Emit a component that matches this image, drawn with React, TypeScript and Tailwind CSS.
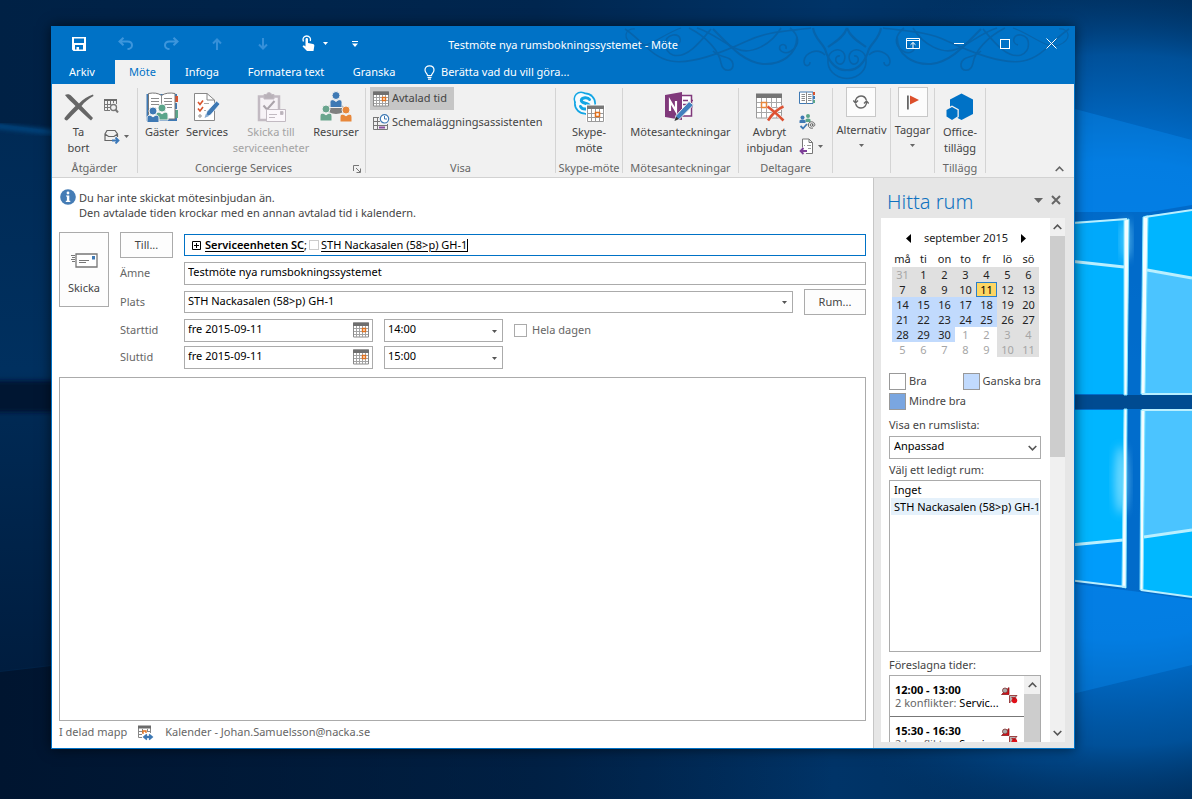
import type { ReactNode } from "react";

type IconProps = { className?: string };

/* ---------- desktop ---------- */

const Wallpaper = () => (
    <svg className="absolute inset-0 h-full w-full" viewBox="0 0 1192 799" preserveAspectRatio="none" aria-hidden="true">
        <defs>
            <linearGradient id="night" x1="0" x2="1" y1="0" y2="0">
                <stop offset="0" stopColor="#002145" />
                <stop offset="0.45" stopColor="#00264f" />
                <stop offset="0.7" stopColor="#003468" />
                <stop offset="1" stopColor="#002c58" />
            </linearGradient>
            <radialGradient id="glow" gradientUnits="userSpaceOnUse" cx="1120" cy="400" r="480" gradientTransform="translate(0 40) scale(1 0.9)">
                <stop offset="0" stopColor="#0080e6" />
                <stop offset="0.55" stopColor="#0074d8" />
                <stop offset="0.8" stopColor="#005cae" stopOpacity="0.75" />
                <stop offset="1" stopColor="#003468" stopOpacity="0" />
            </radialGradient>
            <linearGradient id="left" x1="0" x2="0" y1="0" y2="1">
                <stop offset="0" stopColor="#002a55" />
                <stop offset="0.45" stopColor="#00305f" />
                <stop offset="0.5" stopColor="#002a55" />
                <stop offset="1" stopColor="#001d3f" />
            </linearGradient>
            <linearGradient id="bottom" x1="0" x2="1" y1="0" y2="0">
                <stop offset="0" stopColor="#001530" />
                <stop offset="0.7" stopColor="#001530" stopOpacity="0" />
            </linearGradient>
            <filter id="soft" x="-50%" y="-50%" width="200%" height="200%">
                <feGaussianBlur stdDeviation="5" />
            </filter>
            <filter id="edge" x="-10%" y="-30%" width="120%" height="160%">
                <feGaussianBlur stdDeviation="2" />
            </filter>
        </defs>
        <rect width="1192" height="799" fill="url(#night)" />
        <path d="M0 124L60 132V664L0 671Z" fill="url(#left)" />
        <path d="M-5 126L60 133" stroke="#00457f" strokeWidth="5" filter="url(#edge)" />
        <path d="M-10 381H70V412H-10Z" fill="#001631" filter="url(#edge)" />
        <path d="M0 672L60 665H1192V799H0Z" fill="url(#bottom)" />
        <rect width="1192" height="799" fill="url(#glow)" />
        <path d="M1060 105L1192 140V665L1060 697Z" fill="#0a90f5" opacity="0.35" />
        <path d="M1060 212H1150L1192 205V600L1140 592L1060 582Z" fill="#005db8" opacity="0.6" />
        <path d="M1060 222L1127 219V394H1060Z" fill="#00a9fb" />
        <path d="M1060 260L1127 267V394H1060Z" fill="#00b2ff" />
        <path d="M1144 216L1192 210V394H1142Z" fill="#00b5ff" />
        <path d="M1144 271L1192 278V394H1142Z" fill="#4bc4ff" />
        <path d="M1060 410H1126V587L1060 579Z" fill="#00b6ff" />
        <path d="M1060 546L1126 541V587L1060 579Z" fill="#009cfb" />
        <path d="M1142 410H1192V597L1141 589Z" fill="#4bc4ff" />
        <path d="M1142 537L1192 530V597L1141 589Z" fill="#00b8ff" />
        <path d="M1060 395H1192V409H1060Z" fill="#004b91" />
        <ellipse cx="1126" cy="240" rx="4" ry="20" fill="#8fe6ff" opacity="0.7" filter="url(#soft)" />
        <ellipse cx="1121" cy="480" rx="6" ry="34" fill="#a5ebff" opacity="0.7" filter="url(#soft)" />
        <g fill="#f4fdff" stroke="#7fe4ff" strokeWidth="1">
            <path d="M1124 220L1129 219L1127 395H1124Z" />
            <path d="M1143 217L1148 216L1145 394H1141Z" />
            <path d="M1124 409H1127L1126 588L1122 587Z" />
            <path d="M1141 410H1145L1143 590H1140Z" />
        </g>
        <g fill="none" stroke="#b9efff" strokeWidth="2">
            <path d="M1060 260L1124 267M1147 270L1192 278M1060 546L1123 540M1144 537L1192 530" strokeWidth="3" />
            <path d="M1060 224L1127 219M1145 217L1192 210M1142 394H1192M1142 410H1192M1060 579L1126 587M1141 590L1192 597" />
        </g>
    </svg>
);

/* swirls in the title bar, one half mirrored around the middle */
const Flourish = () => (
    <svg className="pointer-events-none absolute right-0 top-0 h-[58px] w-[453px]" viewBox="-226 26 453 58" fill="none" stroke="#0664ac" strokeWidth="1.600" aria-hidden="true">
        <defs>
            <g id="swirl">
                <path d="M0 77.500C13 77 20 68 19 58C18 50 9 46 4 51C0 56 3 64 8 63C13 61 12 54 7 55" />
                <path d="M34 27C32 38 26 40 22 48C18 62 10 70 0 69M0 27C4 38 14 42 19 46" strokeWidth="2.200" />
                <path d="M22 54C30 46 42 52 43 60C43 66 37 66 37 61" />
                <path d="M57 27C48 34 46 44 56 50C62 54 69 50 67 45C64 42 60 44 61 48" />
                <path d="M50 36C50 54 66 64 84 63C104 61 118 44 134 28" strokeWidth="2" />
                <path d="M158 27C140 36 128 50 126 62C124 72 113 71 114 63C116 54 126 58 134 50" />
                <path d="M36 27C56 30 80 30 100 40C126 52 156 64 176 60C196 56 204 40 222 28" />
                <path d="M66 27C76 44 96 54 110 48C124 42 134 32 150 27" />
                <path d="M136 28C146 40 160 58 174 54C184 50 184 36 174 34C166 33 164 42 171 44" />
                <path d="M166 27C186 34 198 48 212 44C226 38 222 27 212 28" strokeWidth="1.200" />
            </g>
        </defs>
        <use href="#swirl" />
        <use href="#swirl" transform="scale(-1 1)" />
    </svg>
);

/* ---------- icons ---------- */

const CaretDown = ({ className = "" }: IconProps) => (
    <svg className={className} width="5" height="3" viewBox="0 0 5 3" fill="currentColor" aria-hidden="true">
        <path d="M0 0H5L2.500 3Z" />
    </svg>
);

const Chevron = ({ className = "" }: IconProps) => (
    <svg className={className} width="9" height="6" viewBox="0 0 9 6" fill="none" stroke="currentColor" strokeWidth="1.600" aria-hidden="true">
        <path d="M0.700 5L4.500 1.200L8.300 5" />
    </svg>
);

const SaveIcon = () => (
    <svg width="14" height="14" viewBox="0 0 14 14" fill="#fff" aria-hidden="true">
        <path fillRule="evenodd" d="M0 0H14V14H1.500L0 12.500ZM2 1.500V6H12V1.500ZM3 8V12.500H4.500V10H7V12.500H11V8Z" />
    </svg>
);

const UndoIcon = ({ className = "" }: IconProps) => (
    <svg className={className} width="15" height="13" viewBox="0 0 15 13" fill="none" stroke="#3d96dc" strokeWidth="2" aria-hidden="true">
        <path d="M5.500 0.800L1.500 4.500L5.500 8.200M2 4.500H9.500C12.500 4.500 14 6.200 14 8.200C14 10.500 12 12 9.500 12" />
    </svg>
);

const ArrowIcon = ({ className = "" }: IconProps) => (
    <svg className={className} width="10" height="12" viewBox="0 0 10 12" fill="none" stroke="#3590d9" strokeWidth="2" aria-hidden="true">
        <path d="M5 12V1.500M1 5.500L5 1.500L9 5.500" />
    </svg>
);

const TouchIcon = () => (
    <svg width="13" height="17" viewBox="0 0 13 17" aria-hidden="true">
        <path d="M1.500 6.500C0 3 2.500 1 4.700 1C7.200 1 9.200 3 8.200 6" fill="none" stroke="#fff" strokeWidth="1.300" />
        <path d="M3.500 4.200C3.500 2.700 6 2.700 6 4.200V8L11 9C12 9.300 12.500 10 12.300 11L11.500 16H5L0.800 11.800C0.300 10.800 1.300 10 2.200 10.600L3.500 11.500Z" fill="#fff" />
    </svg>
);

const BulbIcon = () => (
    <svg width="11" height="15" viewBox="0 0 11 15" fill="none" stroke="#fff" strokeWidth="1.200" aria-hidden="true">
        <path d="M3.500 10.500C3.500 8.500 1 8 1 5C1 2.400 3 0.800 5.500 0.800C8 0.800 10 2.400 10 5C10 8 7.500 8.500 7.500 10.500ZM3.500 12.300H7.500M4 14.200H7" />
    </svg>
);

const DeleteIcon = () => (
    <svg width="30" height="28" viewBox="0 0 30 28" fill="#666" aria-hidden="true">
        <path d="M1 2C3 0.500 6 1 7.500 3L15 10.500C19 6 24 3 29 1.500L29.500 3C25 5.500 20.500 9 17.500 13L29 25L27 27.500C23 24 18 19.500 14.500 16C10 20 6 25 3 27.500C1.500 27.500 0 26.500 0.500 25C3.500 21 7.500 17 11.500 13C8 9.500 4 6 1 2Z" />
    </svg>
);

const CalendarIcon = ({ className = "" }: IconProps) => (
    <svg className={className} width="16" height="16" viewBox="0 0 16 16" aria-hidden="true">
        <path d="M0.500 1H15.500V15H0.500Z" fill="#fff" stroke="#8a8a8a" />
        <path d="M3.500 4V15M6.500 4V15M9.500 4V15M12.500 4V15M1 6.500H15M1 9.500H15M1 12.500H15" stroke="#a3a3a3" fill="none" />
        <path d="M0 0.500H16V4H0Z" fill="#6f6f6f" />
        <path d="M9.500 6.500H12.500V9.500H9.500Z" fill="#fff" stroke="#e2711d" strokeWidth="1.400" />
    </svg>
);

const CalendarSearchIcon = () => (
    <svg width="15" height="14" viewBox="0 0 15 14" fill="none" stroke="#777" aria-hidden="true">
        <path d="M0.500 1.500H12.500M0.500 1V11.500H6M3.500 2V11M6.500 2V6M1 5.500H7M1 8.500H6M12.500 1V5M9.500 2V4" />
        <path d="M0 0H13V2H0Z" fill="#6b6b6b" stroke="none" />
        <circle cx="9.500" cy="8.500" r="3" strokeWidth="1.300" />
        <path d="M11.500 10.500L14 13.500" strokeWidth="2" />
    </svg>
);

const ForwardIcon = () => (
    <svg width="16" height="15" viewBox="0 0 16 15" fill="none" stroke="#666" strokeWidth="1.200" aria-hidden="true">
        <path d="M8 11.500H1V5L3 1.500H11L13.500 5V8M1 5L4.500 7.500H10L13.500 5" />
        <path d="M8 11.500H14.500M11.500 8.500L14.500 11.500L11.500 14.500" stroke="#3c78b8" strokeWidth="1.800" />
    </svg>
);

const Person = ({ x, y, color }: { x: number; y: number; color: string }) => (
    <g fill={color} stroke="#f1f1f1" strokeWidth="1">
        <path d={`M${x - 6} ${y + 12}V${y + 7}C${x - 6} ${y + 4} ${x - 3} ${y + 3} ${x} ${y + 6}C${x + 3} ${y + 3} ${x + 6} ${y + 4} ${x + 6} ${y + 7}V${y + 12}Z`} />
        <circle cx={x} cy={y} r="4" />
    </g>
);

const GuestsIcon = () => (
    <svg width="32" height="30" viewBox="0 0 32 30" aria-hidden="true">
        <path d="M0.500 2H31V29H0.500Z" fill="#3e79b4" />
        <path d="M29 4H32V10H29Z" fill="#d85430" />
        <path d="M29 18H32V26H29Z" fill="#5ba58a" />
        <path d="M29 10H32V11H29ZM29 17H32V18H29Z" fill="#f1f1f1" />
        <path d="M2.500 1.500C8 0.500 12 1 15.500 3.500C19 1 24 0.500 29 1.500V27H2.500Z" fill="#fff" stroke="#777" />
        <path d="M15.500 3.500V18M5 6.500H13M5 9.500H13M5 12.500H13M18 6.500H26M18 9.500H26M18 12.500H26M21 15.500H26" stroke="#8b8b8b" fill="none" />
        <Person x={16} y={16} color="#5ba58a" />
        <Person x={7} y={19} color="#3e79b4" />
    </svg>
);

const ServicesIcon = () => (
    <svg width="28" height="30" viewBox="0 0 28 30" fill="none" aria-hidden="true">
        <path d="M1.500 1.500H14L21.500 8V28.500H1.500Z" fill="#fff" stroke="#888" />
        <path d="M14 1.500V8H21.500" stroke="#888" />
        <path d="M5 10L7 12.500L10 8.500M5 16.500L7 19L10 15" stroke="#d9532c" strokeWidth="1.600" />
        <circle cx="7" cy="24" r="1.200" stroke="#888" />
        <path d="M11 11.500H16M11 18.500H13" stroke="#aaa" />
        <path d="M12 25.500L14 19.500L23.500 9L27 12L17.500 23Z" fill="#3e79b4" stroke="#fff" strokeWidth="0.700" />
        <path d="M11.500 26L13 21.500L16 24Z" fill="#8aaed4" />
    </svg>
);

const SendUnitsIcon = () => (
    <svg width="29" height="30" viewBox="0 0 29 30" fill="none" stroke="#c2bac2" aria-hidden="true">
        <path d="M2 4.500H22V28H2Z" fill="#f6f2f6" strokeWidth="2.500" />
        <path d="M7 2.500H9.500C10 0 14 0 14.500 2.500H17V7H7Z" fill="#b9b2b9" />
        <path d="M6.500 13.500L10 17.500L17.500 9" stroke="#aaa3aa" strokeWidth="2" />
        <path d="M9.500 17.500H28.500V29.500H9.500Z" fill="#fbf7fb" />
        <path d="M12 22.500H20M12 25.500H18" />
        <path d="M23.500 19.500H26V22.500H23.500Z" fill="#b9b2b9" />
    </svg>
);

const ResourcesIcon = () => (
    <svg width="34" height="32" viewBox="0 0 34 32" aria-hidden="true">
        <ellipse cx="17" cy="18" rx="9" ry="5" fill="#808080" />
        <Person x={17} y={4.5} color="#3e79b4" />
        <Person x={7} y={18} color="#6aa58e" />
        <Person x={27} y={19} color="#e8873a" />
    </svg>
);

const SchedulerIcon = () => (
    <svg width="17" height="16" viewBox="0 0 17 16" fill="none" stroke="#777" aria-hidden="true">
        <path d="M0.500 3.500H6M0.500 3V15.500H14.500V10M4.500 4V15M1 7.500H7M1 11.500H14" />
        <path d="M6 12.500H12V14.500H6Z" fill="#8a4f9e" stroke="none" />
        <circle cx="11.500" cy="4.800" r="4.200" fill="#fff" stroke="#3e79b4" strokeWidth="1.200" />
        <path d="M11.500 2V5H14" stroke="#3e79b4" />
    </svg>
);

const SkypeIcon = () => (
    <svg width="33" height="32" viewBox="0 0 33 32" aria-hidden="true">
        <circle cx="9" cy="8" r="7.500" fill="#12a5e4" />
        <circle cx="17" cy="17" r="7.500" fill="#12a5e4" />
        <circle cx="13" cy="12.500" r="11" fill="#12a5e4" />
        <circle cx="9" cy="8" r="6" fill="#f4fbff" />
        <circle cx="17" cy="17" r="6" fill="#f4fbff" />
        <circle cx="13" cy="12.500" r="9.300" fill="#f4fbff" />
        <path d="M17.500 8.500C16 6 9.500 6 9.300 9.500C9.300 13 17.500 11.500 17.300 15.300C17 19 10 19 8.500 15.500" fill="none" stroke="#12a5e4" strokeWidth="3" strokeLinecap="round" />
        <path d="M14 13.500H33V31H14Z" fill="#fff" />
        <path d="M15.500 17V30.500H31.500V17M19.500 18V30M23.500 18V30M27.500 18V30M16 22.500H31M16 26.500H31" fill="none" stroke="#9a9a9a" />
        <path d="M15 14.500H32V18H15Z" fill="#777" />
        <path d="M23.500 21.500H27.500V25.500H23.500Z" fill="#fff" stroke="#e2711d" strokeWidth="1.500" />
    </svg>
);

const OneNoteIcon = () => (
    <svg width="30" height="30" viewBox="0 0 30 30" aria-hidden="true">
        <path d="M15 3.500H26.500V24H15Z" fill="#fff" stroke="#80397b" strokeWidth="1.500" />
        <path d="M18 8.500H23M18 12.500H23M18 16.500H22M26.500 8.500H28M26.500 14.500H28" stroke="#80397b" strokeWidth="1.500" />
        <path d="M0 3L17 0V28L0 25Z" fill="#80397b" />
        <path d="M5 19V9L11 19V9" fill="none" stroke="#fff" strokeWidth="2.200" />
        <path d="M9.500 29L11 23.500L24 9.500L28.500 13L14.500 27Z" fill="#4180be" stroke="#f1f1f1" strokeWidth="1" />
        <path d="M9.500 29L11 24.500L14 27Z" fill="#333" />
    </svg>
);

const CancelIcon = () => (
    <svg width="30" height="30" viewBox="0 0 30 30" fill="none" aria-hidden="true">
        <path d="M1.500 4V26H26.500V4Z" fill="#fff" stroke="#9a9a9a" />
        <path d="M6.500 5V26M11.500 5V26M16.500 5V26M21.500 5V26M2 10.500H26M2 15.500H26M2 20.500H26" stroke="#a8a8a8" />
        <path d="M1 1.500H27V6H1Z" fill="#757575" />
        <path d="M6.500 10.500H11.500V15.500H6.500Z" fill="#fff" stroke="#e8873a" strokeWidth="1.500" />
        <path d="M12.500 14.500C18 18.500 24 24 28.500 28.500M28.500 14.500C22 17 17 22.500 13 28.500" stroke="#f1f1f1" strokeWidth="4" />
        <path d="M12.500 14.500C18 18.500 24 24 28.500 28.500M28.500 14.500C22 17 17 22.500 13 28.500" stroke="#dd5233" strokeWidth="2.600" />
    </svg>
);

const AddressBookIcon = () => (
    <svg width="16" height="14" viewBox="0 0 16 14" fill="none" aria-hidden="true">
        <path d="M0.500 1H14V12.500H0.500Z" fill="#fff" stroke="#3e79b4" />
        <path d="M7.500 1V13M2.500 3.500H6M2.500 5.500H6M2.500 7.500H6M2.500 9.500H6M9 3.500H12.500M9 5.500H12.500M9 7.500H12.500M9 9.500H12.500" stroke="#8a8a8a" />
        <path d="M14 1H16V4H14Z" fill="#d85430" />
        <path d="M14 5H16V8H14Z" fill="#3e79b4" />
        <path d="M14 9H16V12H14Z" fill="#5ba58a" />
    </svg>
);

const CheckNamesIcon = () => (
    <svg width="17" height="17" viewBox="0 0 17 17" fill="none" aria-hidden="true">
        <circle cx="9" cy="3" r="2" fill="#5ba58a" />
        <path d="M6.500 9V6.500C8 5 10 5 11.500 6.500V9Z" fill="#5ba58a" />
        <circle cx="3.500" cy="4.500" r="2" fill="#3e79b4" />
        <path d="M0.500 10V7.500C2 6 5 6 6.500 7.500V10Z" fill="#3e79b4" />
        <path d="M1.500 13L4 15.500L8 11" stroke="#3e79b4" strokeWidth="1.800" />
        <circle cx="12.500" cy="12" r="1.300" stroke="#666" />
        <path d="M13.800 10.500V13C14.500 14 16 13 15.800 11.500C15.500 9.500 14 8.800 12.500 8.800C10.500 8.800 9.300 10.300 9.300 12C9.300 14.500 11.500 15.800 14 15" stroke="#666" />
    </svg>
);

const ResponseIcon = () => (
    <svg width="15" height="17" viewBox="0 0 15 17" fill="none" aria-hidden="true">
        <path d="M3.500 9.500V1H10L13.500 4.500V15.500H7" fill="#fff" stroke="#777" />
        <path d="M10 1V4.500H13.500" stroke="#777" />
        <path d="M8 7.500H12M9 10.500H12M5 7.500H6" stroke="#999" />
        <path d="M8 13H1.500M4.500 10L1.500 13L4.500 16" stroke="#7d3f98" strokeWidth="1.800" />
    </svg>
);

const RecurrenceIcon = () => (
    <svg width="16" height="14" viewBox="0 0 16 14" fill="none" stroke="#666" strokeWidth="1.400" aria-hidden="true">
        <path d="M2.500 7.500C2 3.500 5 1 8 1C10.500 1 12.500 2.500 13.300 5M13.500 6.500C14 10.500 11 13 8 13C5.500 13 3.500 11.500 2.700 9" />
        <path d="M0.300 5.500L2.500 8L5 5.500M11 8.500L13.500 6L15.700 8.500" />
    </svg>
);

const FlagIcon = () => (
    <svg width="12" height="15" viewBox="0 0 12 15" aria-hidden="true">
        <path d="M0 0.500H1.800V14.500H0Z" fill="#666" />
        <path d="M3 0.500L12 5L3 9.500Z" fill="#dc4f2b" />
    </svg>
);

const StoreIcon = () => (
    <svg width="28" height="28" viewBox="0 0 28 28" fill="#0072c6" aria-hidden="true">
        <path d="M4 6.500L15.500 0.500L27 6.500V21L15.500 27L4 21Z" />
        <path d="M-0.800 16.200L6 12.500L12.800 16.200V24L6 28.300L-0.800 24Z" fill="#f1f1f1" />
        <path d="M0.500 17L6 14L11.500 17V23.500L6 27L0.500 23.500Z" />
    </svg>
);

const InfoIcon = () => (
    <svg className="shrink-0" width="16" height="16" viewBox="0 0 16 16" aria-hidden="true">
        <circle cx="8" cy="8" r="7.800" fill="#457cb5" />
        <circle cx="8" cy="4" r="1.400" fill="#fff" />
        <path d="M6 6.500H9.300V11.800H10.300V13H5.800V11.800H6.900V7.600H6Z" fill="#fff" />
    </svg>
);

const SendIcon = () => (
    <svg width="28" height="15" viewBox="0 0 28 15" fill="none" aria-hidden="true">
        <path d="M6 1H27V14H6Z" fill="#fff" stroke="#777" strokeWidth="1.300" />
        <path d="M1 2.500H5M2 4.500H5M1 6.500H5M2 8.500H5M9 9.500H16M9 7.500H19" stroke="#777" />
        <path d="M22 3H25V6.500H22Z" fill="#3e79b4" />
    </svg>
);

const SharedFolderIcon = () => (
    <svg width="16" height="16" viewBox="0 0 16 16" fill="none" aria-hidden="true">
        <path d="M0.500 1V12.500H4M12.500 3V8M1 6.500H4M1 9.500H4M10 6.500H13M4.500 4V8M9.500 4V7" stroke="#888" />
        <path d="M0 0.500H13V3.500H0Z" fill="#6b6b6b" />
        <path d="M5 9V6H8V8" stroke="#e2711d" strokeWidth="1.300" />
        <path d="M6 12H14M9 9.500L6 12L9 14.500M11 9.500L14 12L11 14.500" stroke="#3e79b4" strokeWidth="1.800" />
    </svg>
);

const ConflictIcon = () => (
    <svg width="17" height="18" viewBox="0 0 17 18" aria-hidden="true">
        <path d="M0.500 7.500L8 0.500V7.500Z" fill="#d80f17" stroke="#7b1013" strokeWidth="0.700" />
        <circle cx="4" cy="3.500" r="2.500" fill="#a9a9a9" stroke="#7b2b2b" strokeWidth="0.800" />
        <path d="M8.500 8.500H16L8.500 16Z" fill="#b9b2b2" stroke="#8a2020" strokeWidth="0.800" />
        <circle cx="13.500" cy="13.500" r="2.700" fill="#e01019" />
        <path d="M10 10L15.500 10.500L13 13Z" fill="#b3141a" />
    </svg>
);

/* ---------- ribbon ---------- */

type LargeButtonProps = { icon: ReactNode; lines: string[]; className?: string; disabled?: boolean };

const LargeButton = ({ icon, lines, className = "", disabled }: LargeButtonProps) => (
    <button type="button" disabled={disabled} className={`flex shrink-0 flex-col items-center whitespace-nowrap leading-4 ${disabled ? "text-[#a3a3a3]" : "text-[#444]"} ${className}`}>
        <span className="mb-[2px] flex h-[31px] items-center justify-center">{icon}</span>
        {lines.map((line) => (
            <span key={line}>{line}</span>
        ))}
    </button>
);

type MenuButtonProps = { icon: ReactNode; label: string };

const MenuButton = ({ icon, label }: MenuButtonProps) => (
    <button type="button" className="-mt-1 flex flex-col items-center whitespace-nowrap leading-4 text-[#444]">
        <span className="mb-[5px] flex size-[30px] shrink-0 items-center justify-center border border-[#c8c8c8] bg-[#fcfcfc]">{icon}</span>
        {label}
        <CaretDown className="mt-[6px] text-[#666]" />
    </button>
);

type GroupProps = { label?: string; className?: string; launcher?: boolean; children: ReactNode };

const Group = ({ label, className = "", launcher, children }: GroupProps) => (
    <section className={`relative my-1 flex shrink-0 flex-col border-r border-[#d4d4d4] ${className}`}>
        <div className="flex h-[71px] shrink-0 items-start justify-center pt-[3px]">{children}</div>
        <h2 className="shrink-0 whitespace-nowrap text-center leading-[18px] text-[#666]">{label}</h2>
        {launcher && (
            <button type="button" aria-label="Concierge Services" className="absolute bottom-0 right-1">
                <svg width="8" height="8" viewBox="0 0 8 8" fill="none" stroke="#777" aria-hidden="true">
                    <path d="M0.500 6V0.500H6M3 3L7 7M7.500 3.500V7.500H3.500" />
                </svg>
            </button>
        )}
    </section>
);

const Ribbon = () => (
    <div className="relative flex h-[94px] shrink-0 overflow-hidden border-b border-[#d2d2d2] bg-[#f1f1f1]">
        <Group label="Åtgärder" className="w-[86px]">
            <LargeButton icon={<DeleteIcon />} lines={["Ta", "bort"]} className="mr-[7px] w-9" />
            <div className="flex flex-col gap-4 pt-2">
                <button type="button" aria-label="Kalender">
                    <CalendarSearchIcon />
                </button>
                <button type="button" aria-label="Vidarebefordra" className="flex items-center gap-1 text-[#666]">
                    <ForwardIcon />
                    <CaretDown />
                </button>
            </div>
        </Group>
        <Group label="Concierge Services" className="w-[228px] pr-4" launcher>
            <div className="flex">
                <LargeButton icon={<GuestsIcon />} lines={["Gäster"]} className="ml-[13px] w-11" />
                <LargeButton icon={<ServicesIcon />} lines={["Services"]} className="w-[46px]" />
                <LargeButton icon={<SendUnitsIcon />} lines={["Skicka till", "serviceenheter"]} className="w-[82px]" disabled />
                <LargeButton icon={<ResourcesIcon />} lines={["Resurser"]} className="w-12" />
            </div>
        </Group>
        <Group label="Visa" className="w-[190px]">
            <div className="-mt-1 flex w-full flex-col items-start pl-1 text-[#444]">
                <button type="button" className="flex h-[23px] items-center gap-[3px] bg-[#c6c6c6] pl-[3px] pr-[7px]">
                    <CalendarIcon />
                    Avtalad tid
                </button>
                <button type="button" className="flex h-6 items-center gap-[2px] whitespace-nowrap px-[3px]">
                    <SchedulerIcon />
                    Schemaläggningsassistenten
                </button>
            </div>
        </Group>
        <Group label="Skype-möte" className="w-[67px]">
            <LargeButton icon={<SkypeIcon />} lines={["Skype-", "möte"]} />
        </Group>
        <Group label="Mötesanteckningar" className="w-[116px]">
            <LargeButton icon={<OneNoteIcon />} lines={["Mötesanteckningar"]} />
        </Group>
        <Group label="Deltagare" className="w-[94px]">
            <LargeButton icon={<CancelIcon />} lines={["Avbryt", "inbjudan"]} className="mr-[5px] w-12" />
            <div className="flex flex-col gap-2 pr-[3px]">
                <button type="button" aria-label="Adressbok">
                    <AddressBookIcon />
                </button>
                <button type="button" aria-label="Kontrollera namn">
                    <CheckNamesIcon />
                </button>
                <button type="button" aria-label="Svarsalternativ" className="flex items-center gap-1 text-[#666]">
                    <ResponseIcon />
                    <CaretDown />
                </button>
            </div>
        </Group>
        <Group className="w-[58px]">
            <MenuButton icon={<RecurrenceIcon />} label="Alternativ" />
        </Group>
        <Group className="w-[44px]">
            <MenuButton icon={<FlagIcon />} label="Taggar" />
        </Group>
        <Group label="Tillägg" className="w-[51px]">
            <LargeButton icon={<StoreIcon />} lines={["Office-", "tillägg"]} />
        </Group>
        <button type="button" aria-label="Dölj menyfliksområdet" className="absolute bottom-1 right-[9px] p-px text-[#666]">
            <Chevron />
        </button>
    </div>
);

/* ---------- title bar ---------- */

const quickButton = "flex h-full w-[46px] items-center justify-center";

const TitleBar = () => (
    <header className="relative shrink-0 overflow-hidden bg-[#0072c6] text-white">
        <Flourish />
        <div className="relative grid h-[33px] grid-cols-[1fr_auto_1fr] items-center">
            <div className="flex h-[31px] items-center pl-1">
                <button type="button" aria-label="Spara" className={quickButton}><SaveIcon /></button>
                <button type="button" aria-label="Ångra" className={quickButton}><UndoIcon /></button>
                <button type="button" aria-label="Gör om" className={quickButton}><UndoIcon className="-scale-x-100" /></button>
                <button type="button" aria-label="Föregående" className={quickButton}><ArrowIcon /></button>
                <button type="button" aria-label="Nästa" className={quickButton}><ArrowIcon className="rotate-180" /></button>
                <button type="button" aria-label="Pekläge" className={`${quickButton} gap-2 pl-3`}>
                    <TouchIcon />
                    <CaretDown />
                </button>
                <button type="button" aria-label="Anpassa" className={quickButton}>
                    <svg width="6" height="6" viewBox="0 0 6 6" fill="#fff" aria-hidden="true">
                        <path d="M0 0H6V1H0ZM0 2.500H6L3 6Z" />
                    </svg>
                </button>
            </div>
            <h1 className="whitespace-nowrap pt-1">Testmöte nya rumsbokningssystemet - Möte</h1>
            <div className="flex h-[31px] items-center justify-end">
                <button type="button" aria-label="Menyfliksalternativ" className={quickButton}>
                    <svg width="14" height="11" viewBox="0 0 14 11" fill="none" stroke="#fff" aria-hidden="true">
                        <path d="M0.500 0.500H13.500V10.500H0.500ZM1 2.500H13M7 10V4.500M4.500 6.800L7 4.500L9.500 6.800" />
                    </svg>
                </button>
                <button type="button" aria-label="Minimera" className={quickButton}>
                    <span className="h-px w-[10px] bg-white" />
                </button>
                <button type="button" aria-label="Maximera" className={quickButton}>
                    <span className="size-[10px] border border-white" />
                </button>
                <button type="button" aria-label="Stäng" className={quickButton}>
                    <svg width="11" height="11" viewBox="0 0 11 11" stroke="#fff" aria-hidden="true">
                        <path d="M0.500 0.500L10.500 10.500M10.500 0.500L0.500 10.500" />
                    </svg>
                </button>
            </div>
        </div>
        <nav className="relative flex h-6 items-stretch whitespace-nowrap">
            <button type="button" className="mr-[3px] w-[60px]">Arkiv</button>
            <button type="button" className="w-[55px] bg-[#f1f1f1] text-[#0072c6]">Möte</button>
            <button type="button" className="w-16">Infoga</button>
            <button type="button" className="w-[104px]">Formatera text</button>
            <button type="button" className="w-[72px]">Granska</button>
            <button type="button" className="ml-[14px] flex items-center gap-[6px]">
                <BulbIcon />
                Berätta vad du vill göra...
            </button>
        </nav>
    </header>
);

/* ---------- form ---------- */

const box = "border border-[#ababab] bg-white text-black outline-none";

type SelectBoxProps = { id: string; value: string; options: string[]; label?: string; className?: string };

const SelectBox = ({ id, value, options, label, className = "" }: SelectBoxProps) => (
    <div className={`relative flex ${className}`}>
        <select id={id} aria-label={label} defaultValue={value} className={`${box} w-full appearance-none px-[3px] pb-[2px]`}>
            {options.map((option) => (
                <option key={option}>{option}</option>
            ))}
        </select>
        <CaretDown className="pointer-events-none absolute right-[6px] top-1/2 -mt-px text-[#555]" />
    </div>
);

type TimeRowProps = { label: string; name: string; time: string; children?: ReactNode };

const TimeRow = ({ label, name, time, children }: TimeRowProps) => (
    <div className="flex h-[23px]">
        <label htmlFor={`${name}-date`} className="w-16 leading-[22px]">{label}</label>
        <div className="relative flex w-[189px]">
            <input id={`${name}-date`} defaultValue="fre 2015-09-11" className={`${box} w-full px-[3px] pb-[2px]`} />
            <CalendarIcon className="pointer-events-none absolute right-1 top-[3px]" />
        </div>
        <SelectBox id={`${name}-time`} label={`${label} klockslag`} value={time} options={["14:00", "15:00"]} className="ml-[11px] w-[119px]" />
        {children}
    </div>
);

const MeetingForm = () => (
    <main className="flex min-w-0 flex-1 flex-col bg-white px-[7px] pt-[7px] text-[#666]">
        <div className="flex gap-[3px] pl-px pt-1 leading-[15px] text-[#444]">
            <InfoIcon />
            <p className="pb-px pt-px">
                Du har inte skickat mötesinbjudan än.
                <br />
                Den avtalade tiden krockar med en annan avtalad tid i kalendern.
            </p>
        </div>

        <div className="mt-[11px] flex gap-[11px]">
            <button type="button" className="flex h-[75px] w-[50px] shrink-0 flex-col items-center gap-3 border border-[#ababab] bg-[#fdfdfd] pt-5 text-[#444]">
                <SendIcon />
                Skicka
            </button>

            <div className="flex min-w-0 flex-1 flex-col gap-1">
                <div className="flex h-[26px] items-center gap-[11px]">
                    <button type="button" className="h-[26px] w-[53px] shrink-0 border border-[#ababab] bg-[#fdfdfd] text-[#444]">Till...</button>
                    <div className="flex h-[22px] min-w-0 flex-1 items-center border border-[#0072c6] bg-white px-[7px] text-black">
                        <svg className="mr-1 shrink-0" width="9" height="9" viewBox="0 0 9 9" fill="none" stroke="#000" aria-hidden="true">
                            <path d="M0.500 0.500H8.500V8.500H0.500ZM2 4.500H7M4.500 2V7" />
                        </svg>
                        <span className="whitespace-nowrap"><span className="font-semibold underline underline-offset-2">Serviceenheten SC</span>;</span>
                        <span className="mx-[2px] size-[10px] shrink-0 border border-[#ccc]" />
                        <span className="whitespace-nowrap underline underline-offset-2">STH Nackasalen (58&gt;p) GH-1</span>
                        <span className="h-[13px] w-px bg-black" />
                        <input aria-label="Till" className="min-w-0 flex-1 outline-none" />
                    </div>
                </div>

                <div className="flex h-[23px]">
                    <label htmlFor="subject" className="w-16 leading-[22px]">Ämne</label>
                    <input id="subject" defaultValue="Testmöte nya rumsbokningssystemet" className={`${box} min-w-0 flex-1 px-[3px] pb-[2px]`} />
                </div>

                <div className="flex h-[26px] items-center">
                    <label htmlFor="place" className="w-16">Plats</label>
                    <SelectBox id="place" value="STH Nackasalen (58>p) GH-1" options={["STH Nackasalen (58>p) GH-1"]} className="h-[22px] flex-1" />
                    <button type="button" className="ml-[11px] h-[26px] w-[62px] border border-[#ababab] bg-[#fdfdfd] text-[#444]">Rum...</button>
                </div>

                <TimeRow label="Starttid" name="start" time="14:00">
                    <label className="ml-[11px] flex items-center gap-[5px]">
                        <input type="checkbox" className="size-[13px] appearance-none border border-[#ababab] bg-white" />
                        Hela dagen
                    </label>
                </TimeRow>
                <TimeRow label="Sluttid" name="end" time="15:00" />
            </div>
        </div>

        <textarea aria-label="Meddelande" className="mt-2 min-h-0 flex-1 resize-none border border-[#ababab] outline-none" />

        <footer className="flex h-[27px] items-center pb-1">
            I delad mapp
            <span className="mx-[11px]"><SharedFolderIcon /></span>
            Kalender - Johan.Samuelsson@nacka.se
        </footer>
    </main>
);

/* ---------- room finder ---------- */

const weekdays = ["må", "ti", "on", "to", "fr", "lö", "sö"];
const weeks = [
    [31, 1, 2, 3, 4, 5, 6],
    [7, 8, 9, 10, 11, 12, 13],
    [14, 15, 16, 17, 18, 19, 20],
    [21, 22, 23, 24, 25, 26, 27],
    [28, 29, 30, 1, 2, 3, 4],
    [5, 6, 7, 8, 9, 10, 11],
];

const dayStyle = (week: number, day: number) => {
    const date = weeks[week][day];
    const outside = (week === 0 && date > 20) || (week > 3 && date < 20);
    const text = outside ? "text-[#a6a6a6]" : "text-[#222]";
    if (week === 1 && day === 4) return "bg-[#fdd663] text-black outline outline-1 -outline-offset-1 outline-[#2a7fc9]";
    if (week < 2 || day > 4) return `bg-[#e0e0e0] ${text}`;
    if (!outside) return `bg-[#c1dafd] ${text}`;
    return text;
};

const MonthTable = () => (
    <table className="ml-[11px] w-[147px] table-fixed border-collapse text-center leading-[15px]">
        <thead>
            <tr>
                {weekdays.map((name) => (
                    <th key={name} className="h-[17px] p-0 font-normal text-[#222]">{name}</th>
                ))}
            </tr>
        </thead>
        <tbody>
            {weeks.map((days, week) => (
                <tr key={week}>
                    {days.map((date, day) => (
                        <td key={day} className={`h-[15px] p-0 ${dayStyle(week, day)}`}>{date}</td>
                    ))}
                </tr>
            ))}
        </tbody>
    </table>
);

type SwatchProps = { color: string; label: string };

const Swatch = ({ color, label }: SwatchProps) => (
    <span className="flex items-center gap-[3px] whitespace-nowrap">
        <span className={`size-[17px] border border-[#999] ${color}`} />
        {label}
    </span>
);

const times = ["12:00 - 13:00", "15:30 - 16:30"];

const RoomFinder = () => (
    <aside className="flex w-[201px] shrink-0 flex-col border-l border-[#c6c6c6] bg-[#e6e6e6] pb-[6px] pl-[7px] pr-[9px] text-[#444]">
        <div className="flex h-10 shrink-0 items-center gap-2 pl-[6px] pt-2 text-[#666]">
            <h2 className="flex-1 text-xl font-light text-[#0f72c0]">Hitta rum</h2>
            <button type="button" aria-label="Alternativ för fönstret" className="pb-1">
                <svg width="9" height="5" viewBox="0 0 9 5" fill="currentColor" aria-hidden="true"><path d="M0 0H9L4.500 5Z" /></svg>
            </button>
            <button type="button" aria-label="Stäng fönstret" className="pb-1 pr-1">
                <svg width="10" height="10" viewBox="0 0 10 10" stroke="currentColor" strokeWidth="2" aria-hidden="true"><path d="M1 1L9 9M9 1L1 9" /></svg>
            </button>
        </div>

        <div className="flex min-h-0 flex-1">
            <div className="min-w-0 flex-1 overflow-hidden bg-white pt-3">
                <div className="flex h-4 items-center justify-between pl-[25px] pr-[24px] text-[#222]">
                    <button type="button" aria-label="Föregående månad">
                        <svg width="5" height="9" viewBox="0 0 5 9" aria-hidden="true"><path d="M5 0V9L0 4.500Z" /></svg>
                    </button>
                    september 2015
                    <button type="button" aria-label="Nästa månad">
                        <svg width="5" height="9" viewBox="0 0 5 9" aria-hidden="true"><path d="M0 0V9L5 4.500Z" /></svg>
                    </button>
                </div>
                <div className="mt-1">
                    <MonthTable />
                </div>

                <div className="pl-2 pr-[9px]">
                    <div className="mt-4 flex flex-wrap justify-between gap-y-[3px]">
                        <Swatch color="bg-white" label="Bra" />
                        <Swatch color="bg-[#c1dafd]" label="Ganska bra" />
                        <Swatch color="bg-[#7aa6e0]" label="Mindre bra" />
                    </div>

                    <label htmlFor="room-list" className="mt-[7px] block leading-4">Visa en rumslista:</label>
                    <div className="relative mt-[3px] flex h-[23px]">
                        <select id="room-list" className={`${box} w-full appearance-none px-1 pb-[2px]`}>
                            <option>Anpassad</option>
                        </select>
                        <Chevron className="pointer-events-none absolute right-1 top-[9px] rotate-180 text-[#555]" />
                    </div>

                    <h3 className="mt-[3px] leading-4">Välj ett ledigt rum:</h3>
                    <ul className="mt-[2px] h-[172px] overflow-hidden border border-[#ababab] px-px leading-[17px] text-black">
                        <li><button type="button" className="w-full px-[3px] text-left">Inget</button></li>
                        <li><button type="button" className="w-full whitespace-nowrap bg-[#e5f1fb] pl-[3px] text-left">STH Nackasalen (58&gt;p) GH-1</button></li>
                    </ul>

                    <h3 className="mt-[5px] leading-4">Föreslagna tider:</h3>
                    <div className="mt-[2px] flex h-[100px] border border-[#ababab]">
                        <ul className="min-w-0 flex-1 text-black">
                            {times.map((time) => (
                                <li key={time} className="flex h-[41px] items-center border-b border-[#777] pl-[5px] pr-[6px] leading-[13px]">
                                    <span className="min-w-0 flex-1 whitespace-nowrap">
                                        <b>{time}</b>
                                        <br />
                                        <span className="text-[#666]">2 konflikter:</span> Servic...
                                    </span>
                                    <ConflictIcon />
                                </li>
                            ))}
                        </ul>
                        <div className="flex w-4 flex-col items-center bg-[#f0f0f0] text-[#555]">
                            <Chevron className="my-[6px] shrink-0" />
                            <div className="w-full flex-1 bg-[#cdcdcd]" />
                        </div>
                    </div>
                </div>
            </div>

            <div className="flex w-[15px] shrink-0 flex-col items-center bg-[#f0f0f0] text-[#555]">
                <Chevron className="my-[6px] shrink-0" />
                <div className="h-[221px] w-full bg-[#cdcdcd]" />
                <Chevron className="mb-[6px] mt-auto shrink-0 rotate-180" />
            </div>
        </div>
    </aside>
);

const App = () => {
    return (
        <div className="relative flex h-screen overflow-hidden bg-[#001c3d] pb-[50px] pl-[51px] pr-[117px] pt-[26px] font-['Noto_Sans','Liberation_Sans',sans-serif] text-[11px]">
            <Wallpaper />
            <div className="relative flex min-w-0 flex-1 flex-col border border-[#0072c6] shadow-[0_0_12px_rgba(0,0,0,0.6)]">
                <TitleBar />
                <Ribbon />
                <div className="flex min-h-0 flex-1">
                    <MeetingForm />
                    <RoomFinder />
                </div>
            </div>
        </div>
    );
};

export default App;
